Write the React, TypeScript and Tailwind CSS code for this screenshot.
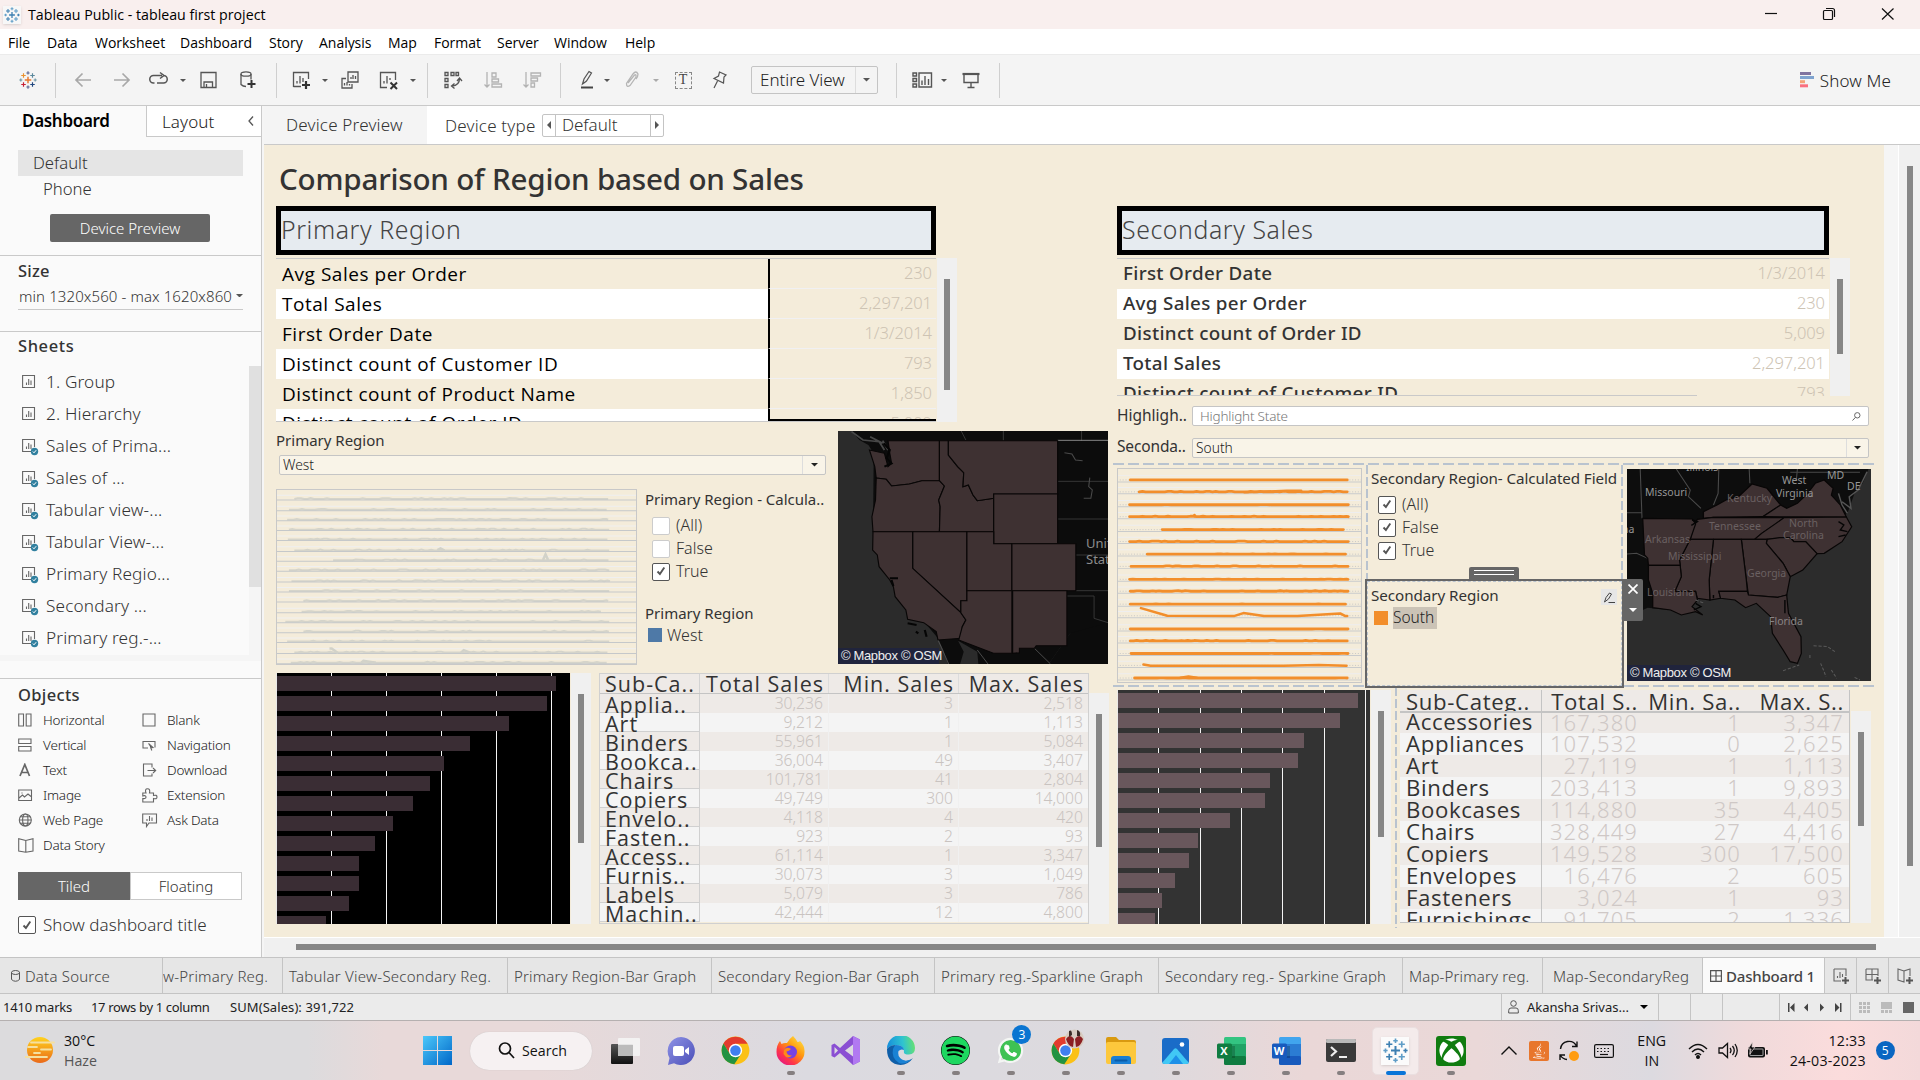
import type { ReactNode } from "react";
import { FaSpotify, FaWhatsapp, FaXbox, FaJava } from "react-icons/fa";

/* ---------- small shared pieces ---------- */

function Caret({ className = "text-[#555]", size = 8 }: { className?: string; size?: number }) {
  return (
    <svg width={size} height={size / 2} viewBox="0 0 8 4" className={`shrink-0 ${className}`}>
      <path d="M0 0H8L4 4Z" fill="currentColor" />
    </svg>
  );
}

function TableauMark({ size, mono = false }: { size: number; mono?: boolean }) {
  const c = mono
    ? ["#3c7fb1", "#5f9dc7", "#5f9dc7", "#3c7fb1", "#5f9dc7", "#3c7fb1", "#5f9dc7", "#3c7fb1", "#5f9dc7"]
    : ["#e8762c", "#5c6692", "#7199a6", "#eb912c", "#59879b", "#c72035", "#1f457e", "#7199a6", "#5c6692"];
  const plus = (x: number, y: number, r: number, color: string) => (
    <path key={`${x}-${y}`} d={`M${x - r} ${y}H${x + r}M${x} ${y - r}V${y + r}`} stroke={color} strokeWidth={r > 3 ? 1.6 : 1.3} />
  );
  return (
    <svg width={size} height={size} viewBox="0 0 20 20" fill="none">
      {plus(10, 10, 3.6, c[0])}
      {plus(10, 2.2, 1.8, c[1])}
      {plus(10, 17.8, 1.8, c[8])}
      {plus(2, 10, 1.7, c[2])}
      {plus(18, 10, 1.7, c[7])}
      {plus(5, 5, 2.5, c[3])}
      {plus(15, 5, 2.5, c[4])}
      {plus(5, 15, 2.5, c[5])}
      {plus(15, 15, 2.5, c[6])}
    </svg>
  );
}

function Check({ on }: { on: boolean }) {
  return (
    <span className={`flex h-[18px] w-[18px] shrink-0 items-center justify-center rounded-[2px] border bg-white ${on ? "border-[#555]" : "border-[#ccc]"}`}>
      {on && (
        <svg width="10" height="10" viewBox="0 0 10 10" fill="none" className="-mt-px -ml-px">
          <path d="M1.500 5.500L3.900 8L8.300 1.500" stroke="#555" strokeWidth="1.900" />
        </svg>
      )}
    </span>
  );
}

function VScroll({ className = "", top, height }: { className?: string; top: number; height: number }) {
  return (
    <div className={`flex w-[20px] shrink-0 justify-center bg-[#f0f0f0] ${className}`}>
      <div className="w-[6px] bg-[#868686]" style={{ marginTop: top, height }} />
    </div>
  );
}

/* ---------- title, menu, toolbar ---------- */

function TitleBar() {
  return (
    <div className="flex h-[29px] items-center bg-[#f9efee] font-['Open_Sans',sans-serif] text-black">
      <div className="ml-[3px] flex h-[18px] w-[18px] items-center justify-center bg-[#f7f7f7] shadow-sm">
        <TableauMark size={16} mono />
      </div>
      <span className="ml-[7px] text-[14.2px]">Tableau Public - tableau first project</span>
      <svg width="150" height="29" viewBox="0 0 150 29" fill="none" stroke="#111" strokeWidth="1.2" className="mr-[5px] ml-auto">
        <path d="M0 13.5H12" />
        <path d="M58.5 11.5a1 1 0 0 1 1-1h7a1 1 0 0 1 1 1v7a1 1 0 0 1-1 1h-7a1 1 0 0 1-1-1zM61 8.5h6.5a2 2 0 0 1 2 2v6.5" />
        <path d="M117 8.5L128.500 19.500M128.500 8.500L117 19.500" />
      </svg>
    </div>
  );
}

function MenuBar() {
  const items: [string, string][] = [
    ["File", "w-[39px]"], ["Data", "w-[48px]"], ["Worksheet", "w-[85px]"], ["Dashboard", "w-[89px]"],
    ["Story", "w-[50px]"], ["Analysis", "w-[69px]"], ["Map", "w-[46px]"], ["Format", "w-[63px]"],
    ["Server", "w-[57px]"], ["Window", "w-[71px]"], ["Help", "w-[50px]"],
  ];
  return (
    <div className="flex h-[25px] bg-white pl-[8px] font-['Open_Sans',sans-serif] text-[14px] leading-[27px] tracking-[-0.03px] text-black">
      {items.map(([t, w]) => (
        <span key={t} className={w}>{t}</span>
      ))}
    </div>
  );
}

function Slot({ w, children }: { w: string; children?: ReactNode }) {
  return <div className={`flex h-full shrink-0 items-center justify-center ${w}`}>{children}</div>;
}

const Sep = () => <div className="h-[35px] w-px shrink-0 bg-[#cfcfcf]" />;

function Ico({ children, w = 20, h = 20, color = "#555", sw = 1.3 }: { children: ReactNode; w?: number; h?: number; color?: string; sw?: number }) {
  return (
    <svg width={w} height={h} viewBox={`0 0 ${w} ${h}`} fill="none" stroke={color} strokeWidth={sw} className="shrink-0">
      {children}
    </svg>
  );
}

function Toolbar() {
  return (
    <div className="flex h-[52px] items-center border-t border-b border-t-[#ebebeb] border-b-[#c9c9c9] bg-[#f4f4f4]">
      <Slot w="w-[55px]"><TableauMark size={18} /></Slot>
      <Sep />
      <Slot w="w-[53px]"><Ico color="#a8a8a8" sw={1.7}><path d="M18 10H3M9.500 3.500L3 10L9.500 16.500" /></Ico></Slot>
      <Slot w="w-[26px]"><Ico color="#a8a8a8" sw={1.7}><path d="M2 10H17M10.500 3.500L17 10L10.500 16.500" /></Ico></Slot>
      <Slot w="w-[48px]"><Ico sw={1.5}><path d="M5.500 13H4.500a3.500 3.500 0 0 1 0-7.500H13M11 2.500L15 5.500L11 8.500M14.500 5.500a3.500 3.500 0 0 1 0 7.500H8" /></Ico></Slot>
      <Slot w="w-[0px]"><Caret size={6} /></Slot>
      <Slot w="w-[52px]"><Ico><path d="M2 2.500H17V17.500H2ZM5 17V12H13.500V17M7.500 14V17" /></Ico></Slot>
      <Slot w="w-[26px]"><Ico><ellipse cx="8" cy="4" rx="5" ry="2.200" /><path d="M3 4V14.500Q5 16.500 8 16.500M13 4V9.500" /><path d="M13.500 10V18M9.500 14H17.500" stroke="#333" strokeWidth="2" /></Ico></Slot>
      <Slot w="w-[15px]" />
      <Sep />
      <Slot w="w-[47px]"><Ico><path d="M2.500 17V2.500H17.500V9M2.500 16.500H10M6 13.500V11M9 13.500V6M12 12V8" /><path d="M15 11V19M11 15H19" stroke="#333" strokeWidth="2.200" /></Ico></Slot>
      <Slot w="w-[2px]"><Caret size={6} /></Slot>
      <Slot w="w-[48px]"><Ico><path d="M8 2H18V12H8ZM11 9V7M13 9V5M15.500 9V6M6 8.500H2V18H12V14M4.500 15.500V13M7 15.500V12M9.500 15.500V14" /></Ico></Slot>
      <Slot w="w-[27px]"><Ico><path d="M9 17.500H2.500V2.500H17.500V10M6 13.500V11M9 13.500V6M12 10V8" /><path d="M12.500 12.500L19 19M19 12.500L12.500 19" stroke="#333" strokeWidth="2" /></Ico></Slot>
      <Slot w="w-[23px]"><Caret size={6} /></Slot>
      <Slot w="w-[3px]" />
      <Sep />
      <Slot w="w-[50px]"><Ico><path d="M2 2.500H5V5.500H2ZM8 2.500H11V5.500H8ZM13 2.500H15.500V5.500H13ZM2 8.500H5V11.500H2ZM2 14.500H5V17.500H2ZM16.500 8.500Q16.500 15.500 9 16M14 11L16.500 8L19 11M11.500 13.500L8.500 16L11.500 18.500" /></Ico></Slot>
      <Slot w="w-[29px]"><Ico color="#b3b3b3"><path d="M4 2V17M1.500 14.500L4 17L6.500 14.500M9 3H13V7H9ZM9 9H15.500V12H9ZM9 14H18.500V17H9Z" /></Ico></Slot>
      <Slot w="w-[50px]"><Ico color="#b3b3b3"><path d="M4 2V17M1.500 14.500L4 17L6.500 14.500M9 3H18.500V6H9ZM9 8H15.500V11H9ZM9 13H12.500V17H9Z" /></Ico></Slot>
      <Slot w="w-[3px]" />
      <Sep />
      <Slot w="w-[51px]"><Ico sw={1.2}><path d="M5.500 14L7 9L12 1.500L14.500 3L9.500 11ZM5.500 14L9 11.500" /><path d="M4 17.500H16" stroke="#444" strokeWidth="2" /></Ico></Slot>
      <Slot w="w-[0px]"><Caret size={6} className="ml-[-10px] text-[#555]" /></Slot>
      <Slot w="w-[39px]"><Ico color="#b5b5b5"><path d="M6 13L12.500 5Q14.500 4 14 7L8 15.500Q4.500 18 4.500 13.500L11 4Q14 0 16 4Q16 7 14 9" /></Ico></Slot>
      <Slot w="w-[10px]"><Caret size={6} className="text-[#aaa]" /></Slot>
      <Slot w="w-[44px]">
        <div className="flex h-[17px] w-[17px] items-center justify-center border border-dashed border-[#888] font-['Liberation_Serif',serif] text-[14px] leading-none text-[#444]">T</div>
      </Slot>
      <Slot w="w-[28px]"><Ico sw={1.2}><path d="M10.500 2L17 5L15 7L14.500 13L5 8.500L9.500 6ZM8.500 11L5 18" /></Ico></Slot>
      <Slot w="w-[18px]" />
      <div className="flex h-[28px] w-[127px] items-center rounded-[2px] border border-[#c4c4c4] text-[17px] font-light text-[#222]">
        <span className="w-[103px] pl-[8px] leading-[26px]">Entire View</span>
        <div className="flex h-full flex-1 items-center justify-center border-l border-[#ddd]"><Caret size={7} /></div>
      </div>
      <div className="w-[18px]" />
      <Sep />
      <Slot w="w-[50px]"><Ico sw={1.4} w={22}><path d="M2 3H5.500V6H2ZM2 8.500H5.500V11.500H2ZM2 14H5.500V17H2ZM8 3H20.500V17H8ZM11 15V10.500M14 15V6M17.500 15V9" /></Ico></Slot>
      <Slot w="w-[0px]"><Caret size={6} className="ml-[-6px] text-[#555]" /></Slot>
      <Slot w="w-[47px]"><Ico sw={1.4}><path d="M1.500 4H18.500" strokeWidth="2.200" /><path d="M3 4V12.500H17V4M10 12.500V17M6.500 17.500H13.500" /></Ico></Slot>
      <Slot w="w-[5px]" />
      <Sep />
      <div className="mr-[29px] ml-auto flex items-center">
        <svg width="14" height="16" viewBox="0 0 14 16">
          <rect width="11" height="3" fill="#8074a0" /><rect y="4" width="14" height="3" fill="#7fa3cf" />
          <rect y="8.200" width="5" height="3" fill="#f3a376" /><rect y="12.300" width="8" height="3" fill="#fa6f7f" />
        </svg>
        <span className="ml-[6px] text-[17px] leading-[25px] font-light tracking-[0.15px] text-[#222]">Show Me</span>
      </div>
    </div>
  );
}

/* ---------- left pane ---------- */

function SheetIcon({ used }: { used: boolean }) {
  return (
    <svg width="18" height="18" viewBox="0 0 18 18" fill="none" className="mt-[2px] shrink-0" stroke="#666" strokeWidth="1.1">
      <path d={used ? "M12.500 9V1.500H.6V13.500H9" : "M.6 1.500H12.500V13.500H.6Z"} />
      <path d="M4.500 11V8.500M6.700 11V5M9 11V6.500" />
      {used && <><circle cx="12.500" cy="13.500" r="3.700" fill="#31809f" stroke="none" /><path d="M10.800 13.500L12 14.800L14.200 12.200" stroke="#fff" strokeWidth="1" /></>}
    </svg>
  );
}

const objectIcons: Record<string, ReactNode> = {
  Horizontal: <path d="M.7 1H5.500V13H.7ZM8.200 1H13V13H8.200Z" />,
  Vertical: <path d="M.7 1H13V5.500H.7ZM.7 8.500H13V13H.7Z" />,
  Text: <path d="M2 13L6.800 1.500L11.500 13M3.700 9.500H10" strokeWidth="1.700" />,
  Image: <path d="M.7 2H13.500V12.500H.7ZM1 10L4.500 7L6.500 9L10 6L13 8.500M4 4.500V5.500" />,
  "Web Page": <><circle cx="7.300" cy="7" r="6" /><ellipse cx="7.300" cy="7" rx="2.700" ry="6" /><path d="M1.300 7H13.300M2.500 3.800H12.200M2.500 10.200H12.200" /></>,
  "Data Story": <path d="M7.800 2.500L.7 .8V13L7.800 14.300L15 13V.8ZM7.800 2.500V14.300" />,
  Blank: <path d="M1 1H13V13H1Z" />,
  Navigation: <><path d="M6 10H1V3.500H13V9.500" /><path d="M6.500 5.500L11 9.500L8.800 9.800L9.800 12.500" fill="#555" /></>,
  Download: <path d="M10 4.500V1H1.500V13H10V10.500M5.500 7.500H13.500M11 5L13.700 7.500L11 10" />,
  Extension: <path d="M.8 5H4Q2.500 .8 5.500 .8Q8.500 .8 7.500 5H11.500V7.500Q15 6.500 15 9Q15 11.500 11.500 10.500V14H.8V10.500Q4 11 4 9Q4 7 .8 8Z" />,
  "Ask Data": <path d="M.7 1H14.500V10H7L4.500 13.500V10H.7ZM5 8V6M7.500 8V3M10 8V4.500" />,
};

function ObjectItem({ name }: { name: string }) {
  return (
    <div className="flex h-[25px] w-[124px] items-center">
      <svg width="16" height="15" viewBox="0 0 16 15" fill="none" stroke="#666" strokeWidth="1.100" className="shrink-0">{objectIcons[name]}</svg>
      <span className="ml-[9px] text-[13.500px] font-light tracking-[-0.2px] whitespace-nowrap text-[#222]">{name}</span>
    </div>
  );
}

function LeftPane() {
  const sheets = ["1. Group", "2. Hierarchy", "Sales of Prima...", "Sales of ...", "Tabular view-...", "Tabular View-...", "Primary Regio...", "Secondary ...", "Primary reg.-..."];
  return (
    <aside className="flex h-[851px] w-[262px] shrink-0 flex-col border-r border-[#c9c9c9] bg-[#fafafa] text-[#333]">
      <div className="flex h-[31px]">
        <div className="w-[146px] pl-[22px] text-[17px] leading-[30px] font-semibold tracking-[-0.3px] text-black">Dashboard</div>
        <div className="flex flex-1 items-center border-b border-l border-[#c9c9c9] bg-white pl-[15px]">
          <span className="text-[17px] leading-[31px] font-light tracking-[0.1px] text-[#222]">Layout</span>
          <svg width="6" height="10" viewBox="0 0 6 10" fill="none" stroke="#555" strokeWidth="1.300" className="mr-[7px] ml-auto"><path d="M5 .5L1 5L5 9.500" /></svg>
        </div>
      </div>
      <div className="mt-[13px] ml-[18px] h-[26px] w-[225px] bg-[#e5e5e5] pl-[15px] text-[16.700px] leading-[26px] font-light">Default</div>
      <div className="h-[26px] pl-[43px] text-[16.700px] leading-[26px] font-light">Phone</div>
      <div className="mt-[12px] ml-[50px] h-[28px] w-[160px] rounded-[2px] bg-[#666] text-center text-[15px] leading-[28px] font-light text-white">Device Preview</div>
      <div className="mt-[13px] h-[76px] border-t border-[#c9c9c9]">
        <div className="h-[26px] pl-[18px] text-[16.500px] leading-[30px] font-medium tracking-[0.200px]">Size</div>
        <div className="ml-[18px] flex h-[28px] w-[225px] items-center justify-between border-b border-[#c9c9c9]">
          <span className="pt-[2px] pl-[1px] text-[15px] font-light tracking-[0.1px] whitespace-nowrap">min 1320x560 - max 1620x860</span>
          <Caret size={7} />
        </div>
      </div>
      <div className="h-[330px] border-t border-[#c9c9c9]">
        <div className="h-[34px] pl-[18px] text-[16.500px] leading-[28px] font-medium tracking-[0.600px]">Sheets</div>
        <div className="flex h-[289px]">
          <div className="w-[249px]">
            {sheets.map((s, i) => (
              <div key={s} className="flex h-[32px] items-center pl-[22px]">
                <SheetIcon used={i > 1} />
                <span className="ml-[6px] text-[17.200px] font-light tracking-[0.150px]">{s}</span>
              </div>
            ))}
          </div>
          <div className="flex-1 bg-[#f5f5f5]"><div className="h-[221px] bg-[#e0e0e0]" /></div>
        </div>
        <div className="h-[6px] bg-[#f5f5f5]" />
      </div>
      <div className="mt-[17px] border-t border-[#c9c9c9] pl-[18px]">
        <div className="h-[29px] text-[16.500px] leading-[31px] font-medium tracking-[0.350px]">Objects</div>
        <div className="flex">
          <div>{["Horizontal", "Vertical", "Text", "Image", "Web Page", "Data Story"].map((n) => <ObjectItem key={n} name={n} />)}</div>
          <div>{["Blank", "Navigation", "Download", "Extension", "Ask Data"].map((n) => <ObjectItem key={n} name={n} />)}</div>
        </div>
        <div className="mt-[14px] flex h-[28px] w-[224px] text-center text-[15px] leading-[28px] font-light">
          <div className="w-[112px] bg-[#666] text-white">Tiled</div>
          <div className="w-[112px] border border-[#c9c9c9] bg-white leading-[26px]">Floating</div>
        </div>
        <div className="mt-[16px] flex items-center">
          <Check on />
          <span className="ml-[7px] text-[17px] leading-[18px] font-light tracking-[0.050px]">Show dashboard title</span>
        </div>
      </div>
    </aside>
  );
}

/* ---------- maps ---------- */

const westStates = [
  "138,600 180,610 190,650 200,640 195,610 190,572 334,572 334,692 285,692 250,702 200,708 185,688 157,684 153,650",
  "157,684 185,688 200,708 250,702 285,692 334,692 348,708 332,750 336,770 334,845 148,845 145,800 155,750",
  "334,572 359,572 359,615 385,650 402,668 400,710 415,705 428,735 440,752 486,745 486,845 334,845 336,770 332,750 348,708 334,692",
  "359,572 665,572 665,732 486,732 486,745 440,752 428,735 415,705 400,710 402,668 385,650 359,615",
  "486,732 665,732 665,881 486,881",
  "259,845 411,845 411,1052 394,1052 394,1088 259,955",
  "148,845 259,845 259,955 394,1088 408,1110 398,1130 395,1165 330,1170 325,1145 290,1118 245,1108 240,1080 210,1040 205,1010 195,990 165,950 160,915 147,900",
  "411,845 486,845 486,881 537,881 537,1022 411,1022",
  "537,881 716,881 716,1022 537,1022",
  "411,1022 537,1022 537,1210 485,1210 388,1170 398,1130 408,1110 394,1088 394,1052 411,1052",
  "539,1022 691,1022 691,1187 605,1187 600,1195 558,1195 558,1208 539,1210",
];

const southStates = [
  "962,415 962,395 1000,375 1025,360 1060,350 1098,312 1140,325 1178,375 1128,410 990,412",
  "1128,410 1178,375 1195,385 1225,370 1250,345 1275,310 1300,300 1325,325 1320,345 1345,375 1362,411",
  "935,440 945,418 990,412 1188,413 1160,435 1125,460 1105,478 925,478",
  "1188,413 1362,411 1377,440 1350,485 1300,520 1280,521 1248,485 1215,485 1205,473 1140,478 1105,478 1125,460",
  "1140,478 1175,473 1205,473 1215,485 1248,485 1280,521 1240,570 1205,590 1185,550 1138,490",
  "1068,478 1140,478 1138,490 1185,550 1205,590 1195,645 1170,652 1088,645 1082,600",
  "990,478 1068,478 1082,600 1085,634 1005,634 1010,655 980,660 978,600",
  "925,478 990,478 978,600 980,660 945,655 940,634 882,634 900,590 895,540",
  "792,415 930,417 940,432 925,478 895,540 897,556 808,556 806,535 797,525",
  "808,556 897,556 900,590 882,634 940,634 945,660 930,680 960,705 940,695 900,705 870,690 820,683 820,640 808,600",
  "1005,634 1085,634 1088,645 1170,652 1195,645 1200,700 1235,770 1236,820 1225,850 1205,845 1185,810 1155,760 1150,710 1110,670 1080,683 1050,660 1010,655",
];

function MapCredit() {
  return <div className="absolute bottom-0 left-0 h-[16px] w-[101px] bg-[#20243c] pl-[3px] font-['Liberation_Sans',sans-serif] text-[13px] leading-[16px] tracking-[-0.350px] whitespace-nowrap text-[#eee]">© Mapbox © OSM</div>;
}

function WestMap() {
  return (
    <div className="relative mt-[9px] h-[233px] w-[270px] overflow-hidden bg-[#2b2b2b]">
      <svg width="270" height="233" viewBox="50 543 756 699" preserveAspectRatio="none" fill="none">
        <path d="M88 543L110 570L135 585L150 610L148 845L200 1000L330 1165L345 1200L358 1242H640L700 1150L806 1242V543Z" fill="#0c0c0c" />
        <path d="M640 1242H806V1118L700 1150Z" fill="#0c0c0c" />
        <path d="M386 1172L402 1205L392 1242H443L440 1205Z" fill="#2b2b2b" />
        <path d="M88 545L120 570L165 575L180 600M140 560L175 580M175 572L190 600" stroke="#484848" strokeWidth="5" />
        <g stroke="#3c3c3c" strokeWidth="2.500">
          <path d="M665 694H806M665 807H806M716 915H806M716 1022H806M691 1038H767V1105L806 1118M513 543V572M732 543V572M395 543L408 570" />
          <path d="M600 1195L645 1242M330 1170L360 1242M440 1200L470 1242" stroke="#555" />
          <path d="M684 608L705 612L715 630L735 632M755 683L752 710L762 720L758 745L738 745" stroke="#4a4a4a" strokeWidth="3" />
          <path d="M665 571H806" stroke="#999" />
        </g>
        <g fill="#3e3132" stroke="#080606" strokeWidth="3.200">
          {westStates.map((p) => <polygon key={p} points={p} />)}
        </g>
        <path d="M178 580L195 600L186 625L200 640L180 650M195 985H218M200 990L205 1008M245 1120L270 1125M268 1145L275 1150M293 1140L298 1160" stroke="#050505" strokeWidth="6" />
      </svg>
      <div className="absolute top-[104px] left-[248px] w-[40px] text-[13px] leading-[16px] text-[#8c8c8c]">Unit<br />Stat</div>
      <MapCredit />
    </div>
  );
}

function SouthMap() {
  const dim = "text-[#6a6061]";
  const lit = "text-[#969696]";
  const labels: [string, string, string][] = [
    ["Missouri", "left-[18px] top-[16px]", lit], ["Illinois", "left-[59px] top-[-9px]", lit], ["Kentucky", "left-[100px] top-[22px]", dim],
    ["West", "left-[155px] top-[4px]", lit], ["Virginia", "left-[149px] top-[17px]", lit], ["MD", "left-[200px] top-[-1px]", lit],
    ["DE", "left-[220px] top-[10px]", lit], ["Tennessee", "left-[82px] top-[50px]", dim], ["North", "left-[162px] top-[47px]", dim],
    ["Carolina", "left-[156px] top-[59px]", dim], ["Arkansas", "left-[18px] top-[63px]", dim], ["Mississippi", "left-[41px] top-[80px]", dim],
    ["Georgia", "left-[120px] top-[97px]", dim], ["Louisiana", "left-[20px] top-[116px]", dim], ["Florida", "left-[142px] top-[145px]", "text-[#8a8485]"],
    ["na", "left-[-5px] top-[53px]", lit],
  ];
  return (
    <div className="relative mt-[4px] ml-[4px] h-[212px] w-[244px] overflow-hidden bg-[#2c2c2c]">
      <svg width="244" height="212" viewBox="748 267 683 636" preserveAspectRatio="none" fill="none">
        <path d="M748 267H1424L1408 310L1385 340L1365 400L1200 560L900 660L870 690L806 683L748 712Z" fill="#0d0d0d" />
        <path d="M748 398H788M785 267L790 415M748 522L775 520L806 535M886 267L925 330L920 350L955 385M1005 267L1003 340L990 375M1090 267L1092 310M1225 267L1222 300M1205 277H1400" stroke="#4a4a4a" strokeWidth="3" />
        <path d="M1420 275L1395 330L1370 350L1375 385L1350 365M1340 340L1350 375L1365 400" stroke="#555" strokeWidth="4" />
        <g fill="#3e3132" stroke="#080606" strokeWidth="3.400">
          {southStates.map((p) => <polygon key={p} points={p} />)}
        </g>
        <path d="M1340 425L1355 435L1345 450L1365 455M1340 470L1360 465M1190 660V700M940 670L955 680L935 690M990 655V645M930 420L945 425L928 436" stroke="#050505" strokeWidth="4" />
        <path d="M1270 797L1310 800L1330 815M1290 850L1298 870L1305 890M1185 872L1230 855M1260 825V838M1320 870L1335 895M1385 892L1400 900M940 660L965 670" stroke="#5a5a5a" strokeWidth="3" strokeDasharray="9 5" />
      </svg>
      {labels.map(([t, pos, c]) => (
        <span key={t} className={`absolute text-[10.500px] leading-[14px] ${pos} ${c}`}>{t}</span>
      ))}
      <MapCredit />
    </div>
  );
}

/* ---------- sparklines ---------- */

const graySpark: [number, number, number][] = [
  [65, 932, 747], [50, 928, 780], [45, 932, 810], [50, 935, 840], [47, 930, 870], [65, 935, 903], [172, 933, 933], [50, 935, 963], [57, 937, 996],
  [50, 935, 1026], [90, 932, 1056], [85, 912, 1089], [40, 935, 1119], [90, 934, 1149], [45, 935, 1179], [65, 930, 1212], [55, 928, 1243],
];

function bumpy(x1: number, x2: number, y: number, seed: number, amp: number, step = 9) {
  let d = `M${x1} ${y}`;
  let s = seed * 7919 + 13;
  for (let x = x1 + step; x < x2; x += step) {
    s = (s * 1103515245 + 12345) % 2147483648;
    const r = s / 2147483648;
    d += `L${x} ${(y - (r > 0.75 ? amp * r : 0)).toFixed(1)}`;
  }
  return `${d}L${x2} ${y}`;
}

function PrimarySpark() {
  return (
    <svg width="361" height="176" viewBox="17 717 992 527" preserveAspectRatio="none" fill="none" className="block border border-[#c8c8c8]">
      {graySpark.map(([x1, x2, y], i) => (
        <g key={y}>
          <path d={`M17 ${y - 14}H1009`} stroke="#efeff0" strokeWidth="3" shapeRendering="crispEdges" />
          <path d={bumpy(x1, x2, y - 3, i + 1, 2.5)} stroke="#d5d4ca" strokeWidth="6" />
          <path d={`M17 ${y}H1009`} stroke="#c5c8ca" strokeWidth="3" shapeRendering="crispEdges" />
        </g>
      ))}
      <path d="M752 929L759 912L766 929M162 1197L168 1197L186 1211M525 1210L533 1202L552 1210M250 1240L256 1234L290 1240M460 899L469 894L480 900" stroke="#d2d2c9" strokeWidth="7" />
    </svg>
  );
}

const orangeSpark: [number, number, number][] = [
  [868, 1480, 688], [893, 1480, 724], [866, 1483, 763], [866, 1483, 799], [958, 1469, 838], [866, 1483, 874], [916, 1475, 912], [870, 1482, 949],
  [866, 1482, 988], [868, 1482, 1024], [868, 1475, 1063], [0, 0, 1098], [868, 1482, 1138], [868, 1480, 1174], [870, 1482, 1212], [0, 0, 1248], [880, 1480, 1286],
];

function SecondarySpark() {
  return (
    <svg width="245" height="215" viewBox="833 655 686 643" preserveAspectRatio="none" fill="none" className="block border border-[#c8c8c8]">
      {orangeSpark.map(([x1, x2, y], i) => (
        <g key={y}>
          <path d={`M833 ${y + 6}H1519`} stroke="#c9cbcc" strokeWidth="3" shapeRendering="crispEdges" />
          <path d={`M833 ${y - 13}H1519`} stroke="#eeeeef" strokeWidth="3" shapeRendering="crispEdges" />
          <path d={`M838 ${y}H1519`} stroke="#c4c4c4" strokeWidth="2.500" strokeDasharray="3 5" />
          {x2 > 0 && <path d={bumpy(x1, x2, y, i + 3, i % 2 ? 1.5 : 0.4)} stroke="#f28e2b" strokeWidth="8.500" strokeLinecap="round" strokeLinejoin="round" />}
        </g>
      ))}
      <g stroke="#f28e2b" strokeWidth="7.500" strokeLinecap="round" strokeLinejoin="round">
        <path d="M898 1075L972 1098L1160 1099L1187 1090L1245 1099H1340L1460 1091L1475 1099H1480" />
        <path d="M905 1245L925 1249H1300L1400 1247L1478 1249" />
        <path d="M1049 794V797M1190 725L1310 721H1350M1010 1285L1032 1281L1055 1285" />
      </g>
    </svg>
  );
}

/* ---------- bar charts ---------- */

function Bars({ ends, grid, width, height, offset, color, bg }: { ends: number[]; grid: number[]; width: number; height: number; offset: number; color: string; bg: string }) {
  return (
    <svg width={width} height={height} viewBox={`0 0 ${width} ${height}`} shapeRendering="crispEdges" className="shrink-0">
      <rect width={width} height={height} fill={bg} />
      {grid.map((x) => <rect key={x} x={x} y="0" width="1" height={height} fill="#f4f4f4" />)}
      <rect width="1" height={height} fill="#e8e8e8" />
      {ends.map((w, i) => <rect key={i} x="1" y={offset + i * 20} width={w} height="15" fill={color} />)}
    </svg>
  );
}

/* ---------- dashboard columns ---------- */

function SummaryTable({ rows, bold }: { rows: [string, string][]; bold?: boolean }) {
  return (
    <>
      {rows.map(([k, v], i) => (
        <div key={k} className={`flex h-[30px] shrink-0 ${bold && i % 2 ? "bg-white" : ""}`}>
          <div
            className={`font-medium whitespace-nowrap ${bold ? "flex-1 pl-[6px] font-['Noto_Sans',sans-serif] text-[18.800px] leading-[29px] tracking-[0.320px] text-[#333]" : `w-[492px] pl-[6px] font-['Open_Sans',sans-serif] text-[19px] leading-[31px] tracking-[0.530px] text-black ${i % 2 ? "bg-white" : ""}`}`}
          >{k}</div>
          <div className={`text-right text-[16.500px] leading-[27px] font-light tracking-[-0.050px] text-[#cdc3b3] ${bold ? "pr-[4px]" : "flex-1 border-b border-l-2 border-b-[#f0f0f2] border-l-black pr-[4px]"}`}>{v}</div>
        </div>
      ))}
    </>
  );
}

function CheckRow({ label, on }: { label: string; on: boolean }) {
  return (
    <div className="flex h-[23px] items-center">
      <Check on={on} />
      <span className="ml-[6px] text-[16px] leading-[23px] font-light text-[#333]">{label}</span>
    </div>
  );
}

const leftTable: [string, string, string, string][] = [
  ["Applia..", "30,236", "3", "2,518"], ["Art", "9,212", "1", "1,113"], ["Binders", "55,961", "1", "5,084"], ["Bookca..", "36,004", "49", "3,407"],
  ["Chairs", "101,781", "41", "2,804"], ["Copiers", "49,749", "300", "14,000"], ["Envelo..", "4,118", "4", "420"], ["Fasten..", "923", "2", "93"],
  ["Access..", "61,114", "1", "3,347"], ["Furnis..", "30,073", "3", "1,049"], ["Labels", "5,079", "3", "786"], ["Machin..", "42,444", "12", "4,800"],
];

const rightTable: [string, string, string, string][] = [
  ["Accessories", "167,380", "1", "3,347"], ["Appliances", "107,532", "0", "2,625"], ["Art", "27,119", "1", "1,113"], ["Binders", "203,413", "1", "9,893"],
  ["Bookcases", "114,880", "35", "4,405"], ["Chairs", "328,449", "27", "4,416"], ["Copiers", "149,528", "300", "17,500"], ["Envelopes", "16,476", "2", "605"],
  ["Fasteners", "3,024", "1", "93"], ["Furnishings", "91,705", "2", "1,336"],
];

function PrimaryColumn() {
  return (
    <div className="ml-[12px] w-[837px] shrink-0">
      <div className="h-[49px] w-[660px] border-[5px] border-black bg-[#e6ebf0] text-[24.800px] leading-[36px] font-light tracking-[0.600px] text-[#444]">Primary Region</div>
      <div className="mt-[3px] flex h-[164px]">
        <div className="flex w-[660px] flex-col overflow-hidden border-t border-b border-[#c9c9c9]">
          <SummaryTable rows={[["Avg Sales per Order", "230"], ["Total Sales", "2,297,201"], ["First Order Date", "1/3/2014"], ["Distinct count of Customer ID", "793"], ["Distinct count of Product Name", "1,850"]]} />
          <div className="flex h-[12px] overflow-hidden">
            <div className="w-[492px] bg-white pl-[6px] font-['Open_Sans',sans-serif] text-[19px] leading-[29px] font-medium tracking-[0.530px] text-black">Distinct count of Order ID</div>
            <div className="flex-1 overflow-hidden border-b-2 border-l-2 border-black pr-[4px] text-right text-[16.500px] leading-[27px] font-light text-[#cdc3b3]">5,009</div>
          </div>
        </div>
        <VScroll className="ml-[1px]" top={21} height={111} />
      </div>
      <div className="flex h-[251px]">
        <div className="w-[562px]">
          <div className="h-[29px] pt-[8px] text-[15px] leading-[20px] text-[#333]">Primary Region</div>
          <div className="mt-[4px] ml-[3px] flex h-[20px] w-[547px] items-center rounded-[2px] border border-[#c5c5c5] bg-[#f9f4e8]">
            <span className="flex-1 pl-[3px] text-[13.800px] leading-[18px] font-light text-[#222]">West</span>
            <div className="flex h-full w-[23px] items-center justify-center border-l border-[#ddd]"><Caret size={7} className="text-[#222]" /></div>
          </div>
          <div className="mt-[14px] flex">
            <PrimarySpark />
            <div className="ml-[8px]">
              <div className="h-[25px] text-[15px] leading-[20px] tracking-[-0.020px] whitespace-nowrap text-[#333]">Primary Region - Calcula..</div>
              <div className="pl-[7px]">
                <CheckRow label="(All)" on={false} />
                <CheckRow label="False" on={false} />
                <CheckRow label="True" on />
              </div>
              <div className="mt-[20px] text-[15px] leading-[20px] text-[#333]">Primary Region</div>
              <div className="flex h-[24px] items-center pl-[3px]">
                <div className="h-[14px] w-[14px] bg-[#4e79a7]" />
                <span className="ml-[5px] text-[16px] leading-[22px] font-light text-[#333]">West</span>
              </div>
            </div>
          </div>
        </div>
        <WestMap />
      </div>
      <div className="flex h-[251px]">
        <Bars width={294} height={251} offset={3} color="#3a2d34" bg="#000" grid={[55, 110, 165, 220, 275]} ends={[279, 270, 232, 193, 167, 153, 136, 116, 98, 82, 82, 72, 49]} />
        <VScroll className="ml-[1px]" top={21} height={149} />
        <div className="ml-[8px] w-[490px] border border-[#d0d0d0] text-[#333]">
          <div className="flex h-[20px] border-b border-[#c4c4c4] bg-[#eeeae7] text-right font-['Open_Sans',sans-serif] text-[21.500px] leading-[20px] font-medium tracking-[1px] whitespace-nowrap">
            <div className="w-[100px] border-r border-[#d3d3d3] pl-[5px] text-left">Sub-Ca..</div>
            <div className="w-[129px] border-r border-[#dcdcdc] pr-[4px]">Total Sales</div>
            <div className="w-[130px] border-r border-[#dcdcdc] pr-[4px]">Min. Sales</div>
            <div className="w-[129px] pr-[4px]">Max. Sales</div>
          </div>
          {leftTable.map((r, i) => (
            <div key={r[0]} className={`flex h-[19px] text-right text-[15.700px] leading-[18px] font-light text-[#c9c3c0] ${i % 2 ? "bg-[#f4f4f4]" : "bg-[#eeeae7]"}`}>
              <div className="relative z-10 w-[100px] border-r border-b border-[#d0d0d0] pl-[5px] text-left font-['Open_Sans',sans-serif] text-[21.500px] leading-[21px] font-medium tracking-[1px] whitespace-nowrap text-[#333]">{r[0]}</div>
              <div className="w-[129px] border-r border-[#f0f0f0] pr-[5px]">{r[1]}</div>
              <div className="w-[130px] border-r border-[#f0f0f0] pr-[5px]">{r[2]}</div>
              <div className="w-[129px] pr-[5px]">{r[3]}</div>
            </div>
          ))}
        </div>
        <VScroll className="mt-[20px]" top={21} height={133} />
      </div>
    </div>
  );
}

const DashH = () => <div className="h-[2px] w-[763px] shrink-0 bg-[repeating-linear-gradient(90deg,#b9c3cf_0_11px,transparent_11px_15px)]" />;
const DashV = ({ className = "" }: { className?: string }) => (
  <div className={`w-[2px] shrink-0 bg-[repeating-linear-gradient(180deg,#b9c3cf_0_9px,transparent_9px_12px)] ${className}`} />
);

function SecondaryColumn() {
  return (
    <div className="w-[771px] shrink-0">
      <div className="ml-[4px] h-[49px] w-[712px] border-[5px] border-black bg-[#e6ebf0] text-[24.800px] leading-[36px] font-light tracking-[0.600px] text-[#444]">Secondary Sales</div>
      <div className="mt-[3px] ml-[4px] flex h-[138px]">
        <div className="flex w-[712px] flex-col overflow-hidden border-t border-[#c9c9c9]">
          <SummaryTable bold rows={[["First Order Date", "1/3/2014"], ["Avg Sales per Order", "230"], ["Distinct count of Order ID", "5,009"], ["Total Sales", "2,297,201"]]} />
          <div className="flex h-[17px] shrink-0">
            <div className="w-[580px] overflow-hidden border-b border-[#c9c9c9] pl-[6px] text-[18.800px] leading-[29px] font-medium tracking-[0.320px] text-[#333]">Distinct count of Customer ID</div>
            <div className="flex-1 overflow-hidden pr-[4px] text-right text-[16.500px] leading-[27px] font-light text-[#cdc3b3]">793</div>
          </div>
        </div>
        <VScroll className="ml-[1px]" top={21} height={75} />
      </div>
      <div className="mt-[10px] ml-[4px] flex h-[20px] text-[15.500px] text-[#333]">
        <span className="w-[75px] leading-[18px]">Highligh..</span>
        <div className="flex h-[20px] w-[677px] items-center justify-between rounded-[2px] border border-[#c5c5c5] bg-white px-[7px]">
          <span className="text-[13.500px] font-light tracking-[-0.2px] text-[#777]">Highlight State</span>
          <svg width="9" height="9" viewBox="0 0 9 9" fill="none" stroke="#666"><circle cx="5.300" cy="3.300" r="2.700" /><path d="M3.500 5.300L.5 8.500" /></svg>
        </div>
      </div>
      <div className="mt-[12px] ml-[4px] flex h-[20px] text-[15.500px] text-[#333]">
        <span className="w-[75px] leading-[17px] tracking-[-0.150px]">Seconda..</span>
        <div className="flex h-[20px] w-[677px] items-center rounded-[2px] border border-[#c5c5c5] bg-[#f9f4e8]">
          <span className="flex-1 pl-[3px] text-[13.800px] leading-[18px] font-light text-[#222]">South</span>
          <div className="flex h-full w-[22px] items-center justify-center border-l border-[#ddd]"><Caret size={7} className="text-[#222]" /></div>
        </div>
      </div>
      <div className="h-[5px]" />
      <DashH />
      <div className="flex h-[220px]">
        <div className="w-[253px] pt-[3px] pl-[4px]"><SecondarySpark /></div>
        <DashV />
        <div className="w-[253px]">
          <div className="h-[114px]">
            <div className="pt-[3px] pl-[3px] text-[15.200px] leading-[21px] tracking-[-0.100px] whitespace-nowrap text-[#333]">Secondary Region- Calculated Field</div>
            <div className="mt-[4px] pl-[10px]">
              <CheckRow label="(All)" on />
              <CheckRow label="False" on />
              <CheckRow label="True" on />
            </div>
            <div className="mt-[5px] ml-[101px] flex h-[12px] w-[50px] flex-col items-center gap-[3px] rounded-t-[2px] bg-[#666] pt-[3px]">
              <div className="h-px w-[40px] bg-white" /><div className="h-px w-[40px] bg-white" />
            </div>
          </div>
          <div className="relative z-10 -ml-[3px] flex h-[109px] w-[259px] items-start">
            <div className="flex h-full w-[259px] shrink-0 flex-col border-2 border-[#666] bg-[#f4ecda]">
              <div className="flex flex-1 flex-col border border-dashed border-[#b9c3cf] pl-[3px]">
                <div className="flex h-[25px] items-center justify-between pt-[2px] pr-[4px]">
                  <span className="text-[15.200px] leading-[21px] tracking-[-0.050px] text-[#333]">Secondary Region</span>
                  <div className="mt-[3px] flex h-[16px] w-[16px] items-center justify-center bg-[#e6e6e6]">
                    <svg width="13" height="13" viewBox="0 0 13 13" fill="none" stroke="#444"><path d="M1.500 11L3 6.500L6.500 2L8.500 3L5.500 8ZM5.500 11.500H12" /></svg>
                  </div>
                </div>
                <div className="flex h-[22px] items-center pl-[3px]">
                  <div className="h-[14px] w-[14px] bg-[#f28e2b]" />
                  <span className="ml-[5px] h-[22px] w-[44px] bg-[#cbc3b6] text-[15.500px] leading-[20px] font-light text-[#222]">South</span>
                </div>
              </div>
            </div>
            <div className="-ml-[1px] flex h-[42px] w-[20px] shrink-0 flex-col items-center justify-between rounded-r-[2px] bg-[#666] pt-[5px] pr-[1px] pb-[9px]">
              <svg width="10" height="10" viewBox="0 0 10 10" stroke="#fff" strokeWidth="1.700"><path d="M.5 .5L9.500 9.500M9.500 .5L.5 9.500" /></svg>
              <Caret size={8} className="text-white" />
            </div>
          </div>
        </div>
        <DashV className="h-[114px]" />
        <SouthMap />
      </div>
      <DashH />
      <div className="flex">
        <div className="mt-[3px] ml-[4px] flex h-[234px] w-[278px]">
          <Bars width={253} height={234} offset={3} color="#69575c" bg="#333" grid={[41, 83, 124, 165, 207, 248]} ends={[240, 222, 186, 180, 152, 147, 112, 80, 71, 57, 44, 37]} />
          <VScroll className="ml-[1px]" top={21} height={126} />
        </div>
        <DashV className="h-[241px]" />
        <div className="mt-[3px] ml-[3px] flex h-[233px]">
          <div className="flex w-[450px] flex-col overflow-hidden border-b border-[#c4c4c4] font-['Open_Sans',sans-serif]">
            <div className="flex h-[23px] shrink-0 border-b-2 border-[#c4c4c4] bg-[#eeeae7] text-right text-[22.200px] leading-[24px] font-medium tracking-[0.650px] whitespace-nowrap text-[#333]">
              <div className="h-[21px] w-[142px] overflow-hidden border-r border-[#c4c4c4] pl-[6px] text-left">Sub-Categ..</div>
              <div className="w-[96px]">Total S..</div>
              <div className="w-[103px]">Min. Sa..</div>
              <div className="flex-1 border-r border-[#c4c4c4] pr-[5px]">Max. S..</div>
            </div>
            {rightTable.map((r, i) => (
              <div key={r[0]} className={`flex shrink-0 text-right font-['Noto_Sans',sans-serif] text-[22px] font-light tracking-[1.100px] text-[#cfc8c6] ${i === 0 ? "h-[20px] leading-[18px]" : "h-[22px] leading-[21px]"} ${i % 2 ? "bg-[#f4f4f4]" : "bg-[#eeeae7]"}`}>
                <div className="w-[142px] border-r border-[#c4c4c4] pl-[6px] text-left font-['Open_Sans',sans-serif] text-[22.200px] font-medium tracking-[0.650px] text-[#333]">{r[0]}</div>
                <div className="w-[96px]">{r[1]}</div>
                <div className="w-[103px]">{r[2]}</div>
                <div className="flex-1 border-r border-[#c4c4c4] pr-[5px]">{r[3]}</div>
              </div>
            ))}
          </div>
          <VScroll className="mt-[21px] ml-[1px]" top={21} height={94} />
        </div>
      </div>
    </div>
  );
}

function Workspace() {
  return (
    <div className="flex h-[851px] flex-1 flex-col">
      <div className="flex h-[39px] items-center border-b border-[#c9c9c9] bg-white text-[17px] font-light tracking-[0.200px] text-[#333]">
        <div className="h-full w-[163px] bg-[#f4f4f4] pl-[22px] leading-[37px]">Device Preview</div>
        <span className="ml-[18px] w-[97px] leading-[37px]">Device type</span>
        <div className="flex h-[23px] w-[122px] items-center rounded-[2px] border border-[#c4c4c4]">
          <div className="flex w-[12px] justify-center"><svg width="4" height="8" viewBox="0 0 4 8"><path d="M4 0V8L0 4Z" fill="#555" /></svg></div>
          <div className="h-full flex-1 border-x border-[#c4c4c4] pl-[6px] leading-[20px] tracking-[-0.050px]">Default</div>
          <div className="flex w-[12px] justify-center"><svg width="4" height="8" viewBox="0 0 4 8"><path d="M0 0V8L4 4Z" fill="#555" /></svg></div>
        </div>
      </div>
      <div className="flex h-[792px]">
        <div className="w-[1620px] shrink-0 overflow-hidden bg-[#f4ecda]">
          <div className="h-[61px] pl-[15px] text-[29.600px] leading-[68px] font-medium tracking-[-0.200px] text-[#333]">Comparison of Region based on Sales</div>
          <div className="flex">
            <PrimaryColumn />
            <SecondaryColumn />
          </div>
        </div>
        <div className="w-[15px] border-r border-white bg-[#f5f5f5]" />
        <div className="flex flex-1 bg-[#f0f0f0] pl-[8px]"><div className="mt-[21px] h-[700px] w-[6px] bg-[#868686]" /></div>
      </div>
      <div className="h-[20px] border-t border-white bg-[#f0f0f0] pt-[6px]"><div className="ml-[32px] h-[6px] w-[1580px] bg-[#868686]" /></div>
    </div>
  );
}

/* ---------- sheet tabs and status bar ---------- */

function SheetTabs() {
  const tabs: [string, string][] = [
    ["Tabular View-Secondary Reg.", "w-[225px] pl-[6px] tracking-[0.250px]"], ["Primary Region-Bar Graph", "w-[204px] pl-[6px] tracking-[0.150px]"],
    ["Secondary Region-Bar Graph", "w-[223px] pl-[6px] tracking-[0.150px]"], ["Primary reg.-Sparkline Graph", "w-[224px] pl-[6px] tracking-[0.180px]"],
    ["Secondary reg.- Sparkine Graph", "w-[244px] pl-[6px] tracking-[0.170px]"], ["Map-Primary reg.", "w-[140px] pl-[6px] tracking-[0.150px]"], ["Map-SecondaryReg", "w-[160px] pl-[10px] tracking-[0.220px]"],
  ];
  const add = ["M2 2H14V9M2 2V14H9M5.500 11V9M8 11V5M10.500 10V7", "M2 2H14V9M2 2V13H9M8 2V13M2 7.500H14", "M8 4L2 2V13L8 15V4L14 2V9"];
  return (
    <div className="flex h-[37px] border-y border-[#c4c4c4] bg-[#e6e6e6] text-[15px] leading-[36px] font-light whitespace-nowrap text-[#444]">
      <div className="flex w-[163px] items-center border-r border-[#c4c4c4] pl-[11px]">
        <svg width="9" height="12" viewBox="0 0 9 12" fill="none" stroke="#555"><ellipse cx="4.500" cy="2.500" rx="4" ry="2" /><path d="M.5 2.500V9.500Q4.500 13 8.500 9.500V2.500" /></svg>
        <span className="ml-[5px] tracking-[0.200px]">Data Source</span>
      </div>
      <div className="w-[120px] overflow-hidden border-r border-[#c4c4c4] tracking-[0.200px]">w-Primary Reg.</div>
      {tabs.map(([t, w]) => <div key={t} className={`border-r border-[#c4c4c4] ${w}`}>{t}</div>)}
      <div className="flex w-[121px] items-center bg-[#fafafa] pl-[7px] font-medium tracking-[-0.200px]">
        <svg width="12" height="12" viewBox="0 0 12 12" fill="none" stroke="#555" strokeWidth="1.200"><path d="M.6 .6H11.400V11.400H.6ZM6 .6V11.400M.6 6H11.400" /></svg>
        <span className="ml-[4px] leading-[34px]">Dashboard 1</span>
      </div>
      {add.map((d) => (
        <div key={d} className="flex flex-1 items-center justify-center border-l border-[#c4c4c4]">
          <svg width="18" height="18" viewBox="0 0 18 18" fill="none" stroke="#666" strokeWidth="1.100"><path d={d} /><path d="M13.500 10V17M10 13.500H17" stroke="#555" strokeWidth="2" /></svg>
        </div>
      ))}
    </div>
  );
}

function StatusBar() {
  return (
    <div className="flex h-[27px] border-b border-[#b5b0b0] bg-[#ebebeb] text-[13px] leading-[26px] text-[#222]">
      <span className="w-[88px] pl-[3px] tracking-[-0.200px]">1410 marks</span>
      <span className="w-[139px] pl-[3px] tracking-[-0.350px]">17 rows by 1 column</span>
      <span className="pl-[3px] tracking-[0.080px]">SUM(Sales): 391,722</span>
      <div className="ml-auto flex">
        <div className="flex w-[157px] items-center border-l border-[#c4c4c4] pl-[6px]">
          <svg width="11" height="14" viewBox="0 0 11 14" fill="none" stroke="#555"><circle cx="5.500" cy="3.500" r="2.800" /><path d="M.7 13V10.500Q.7 8 3 8H8Q10.300 8 10.300 10.500V13Z" /></svg>
          <span className="ml-[8px]">Akansha Srivas...</span>
          <Caret size={8} className="ml-[11px] text-black" />
        </div>
        <div className="w-[32px] border-l border-[#c4c4c4]" />
        <div className="w-[32px] border-l border-[#c4c4c4]" />
        <div className="w-[57px] border-l border-[#c4c4c4]" />
        <div className="flex w-[71px] items-center justify-center border-l border-[#c4c4c4]">
          <svg width="56" height="9" viewBox="0 0 56 9" fill="#444"><path d="M1 0H2.500V9H1ZM7.500 0V9L3 4.500ZM21 .5V8.500L17 4.500ZM33 .5V8.500L37 4.500ZM48 0V9L52.500 4.500ZM53 0H54.500V9H53Z" /></svg>
        </div>
        <div className="flex w-[70px] items-center gap-[11px] border-l border-[#c4c4c4] pl-[8px]">
          <svg width="11" height="11" viewBox="0 0 11 11" fill="#bbb"><path d="M0 0H3V3H0ZM4 0H7V3H4ZM8 0H11V3H8ZM0 4H3V7H0ZM4 4H7V7H4ZM8 4H11V7H8ZM0 8H3V11H0ZM4 8H7V11H4ZM8 8H11V11H8Z" /></svg>
          <svg width="11" height="11" viewBox="0 0 11 11" fill="#bbb"><path d="M0 0H11V7H0ZM0 8H3V11H0ZM4 8H7V11H4ZM8 8H11V11H8Z" /></svg>
          <div className="h-[11px] w-[11px] bg-[#666]" />
        </div>
      </div>
    </div>
  );
}

/* ---------- taskbar ---------- */

function Chrome() {
  return (
    <svg width="29" height="29" viewBox="0 0 48 48">
      <circle cx="24" cy="24" r="23" fill="#fbc116" />
      <path d="M24 13H43.920A23 23 0 0 0 4.080 12.500L14.500 29.500Z" fill="#e33b2e" />
      <path d="M4.080 12.500A23 23 0 0 0 22 46.900L33.500 29.500L24 35L14.500 29.500Z" fill="#229342" />
      <circle cx="24" cy="24" r="11" fill="#fff" />
      <circle cx="24" cy="24" r="8.700" fill="#3f7fee" />
    </svg>
  );
}

const DocIcon = ({ letter, dark, mid, light }: { letter: string; dark: string; mid: string; light: string }) => (
  <div className="relative h-[28px] w-[29px]">
    <svg width="29" height="28" viewBox="0 0 29 28"><rect x="7" width="22" height="9.500" rx="1.500" fill={light} /><rect x="7" y="7" width="22" height="14" fill={mid} /><rect x="7" y="19" width="22" height="9" rx="1.500" fill={dark} /><rect x="7" y="9" width="11" height="12" fill="#000" opacity=".2" /><rect y="6.500" width="15" height="15" rx="1.500" fill={dark} /></svg>
    <span className="absolute top-[6px] left-0 w-[15px] text-center text-[11px] leading-[16px] font-bold text-white">{letter}</span>
  </div>
);

function Taskbar() {
  const apps: { key: string; node: ReactNode; dot?: boolean }[] = [
    { key: "views", node: <svg width="29" height="28" viewBox="0 0 29 28"><defs><linearGradient id="tv" x1="0" y1="0" x2="0" y2="1"><stop offset="0" stopColor="#555" /><stop offset="1" stopColor="#111" /></linearGradient></defs><rect y="7" width="22" height="20" rx="1" fill="url(#tv)" /><rect x="7" y="1" width="22" height="18" rx="1" fill="#f4f4f4" opacity=".9" /><rect x="7" y="8" width="15" height="11" fill="#bbb" /></svg> },
    { key: "chat", node: <svg width="28" height="28" viewBox="0 0 28 28"><defs><linearGradient id="chat" x1="0" y1="0" x2="1" y2="1"><stop offset="0" stopColor="#8f93e6" /><stop offset="1" stopColor="#4b4fb8" /></linearGradient></defs><path d="M14 0A14 14 0 1 1 7 26.200L1 28L2.500 21A14 14 0 0 1 14 0Z" fill="url(#chat)" /><rect x="6" y="9" width="11" height="10" rx="2" fill="#fff" /><path d="M18 13L22 10V18L18 15Z" fill="#fff" /></svg> },
    { key: "chrome", node: <Chrome /> },
    { key: "firefox", dot: true, node: <svg width="29" height="29" viewBox="0 0 29 29"><defs><linearGradient id="ff" x1="1" y1="0" x2="0.200" y2="1"><stop offset="0" stopColor="#fff14f" /><stop offset=".45" stopColor="#ff980e" /><stop offset=".75" stopColor="#ff3647" /><stop offset="1" stopColor="#e31587" /></linearGradient></defs><path d="M17 0Q20 3 21.500 6Q23.500 6 24 5Q29 10 28.500 16A14 13.500 0 0 1 .5 16Q.5 9 4 5L5.500 8Q8 6.500 11 7Q13 3 17 0Z" fill="url(#ff)" /><circle cx="14.500" cy="16" r="6.500" fill="#7543e3" /><path d="M8 14Q11 10 15 13Q13 15 10.500 15.500Q11 20 16 19.500Q11 24 7.500 18Z" fill="#ff8a16" /></svg> },
    { key: "vs", node: <svg width="30" height="29" viewBox="0 0 30 29"><path d="M22 0L29 3.500V25.500L22 29L9 17L3.500 21.500L.5 20V9L3.500 7.500L9 12ZM22 8.500L14 14.500L22 20.500ZM3.500 11V18L7 14.500Z" fill="#8a4fd3" fillRule="evenodd" /><path d="M22 0L29 3.500V25.500L22 29Z" fill="#b179f1" /></svg> },
    { key: "edge", dot: true, node: <svg width="30" height="29" viewBox="0 0 30 29"><defs><linearGradient id="eg" x1="0" y1=".3" x2="1" y2=".2"><stop offset="0" stopColor="#1790dc" /><stop offset=".55" stopColor="#2fc3d0" /><stop offset="1" stopColor="#6be36b" /></linearGradient></defs><path d="M1 13A14 13.500 0 0 1 29 12Q29 18 23 18.500Q17 18.500 18 15Q17 9 11 9Q4 9 1 13Z" fill="url(#eg)" /><path d="M1 13Q4 9 10 9Q7 13 9 18Q12 25 20 25Q24 25 27 22Q22 29 14.500 29Q1 28 1 13Z" fill="#0f5ea8" /><path d="M10 9Q17 9 18 14Q15 12.500 12.500 15Q11 20 16 23.500Q20 26 25.500 23Q20 29 13 27Q5 22 7 13Q8 10 10 9Z" fill="#1a82d4" /></svg> },
    { key: "spotify", dot: true, node: <div className="rounded-full bg-black"><FaSpotify size={29} color="#1ed760" /></div> },
    { key: "whatsapp", dot: true, node: <div className="relative"><div className="flex h-[29px] w-[29px] items-center justify-center"><FaWhatsapp size={29} color="#f4f6f4" className="absolute" /><div className="h-[22px] w-[22px] rounded-full bg-[#3ec253]" /><svg width="14" height="14" viewBox="0 0 14 14" className="absolute"><path d="M3 1L5 1.500L5.700 4.500L4.500 6Q6 8.500 8.300 9.500L9.800 8L12.500 9.500L12 12Q10 14 6 11Q2 8 1.200 5Q1 2 3 1Z" fill="#fff" /></svg></div><span className="absolute -top-[11px] left-[16px] h-[19px] w-[19px] rounded-full bg-[#0a75d1] text-center text-[12px] leading-[19px] text-white">3</span></div> },
    { key: "chrome2", dot: true, node: <div className="relative"><Chrome /><svg width="19" height="20" viewBox="0 0 19 20" className="absolute -top-[7px] left-[14px]"><circle cx="9.500" cy="10" r="9.500" fill="#d8cbc0" /><path d="M1 10Q5 4 9 10L8 18Q3 17 1 10ZM10 10Q14 4 18 10Q16 17 11 18Z" fill="#8c1f22" /><path d="M4 2Q7 0 7 6L4 8ZM12 1Q16 2 15 7H12Z" fill="#3a2a25" /></svg></div> },
    { key: "files", dot: true, node: <svg width="30" height="27" viewBox="0 0 30 27"><path d="M0 2Q0 0 2 0H10L13 3H28Q30 3 30 5V10H0Z" fill="#d99a10" /><rect y="5" width="30" height="22" rx="2" fill="#fdc83c" /><path d="M5 27V22Q5 19 8 19H22Q25 19 25 22V27Z" fill="#1a7fd4" /><rect x="8.500" y="22.500" width="13" height="2" rx="1" fill="#0b5ca8" /></svg> },
    { key: "photos", dot: true, node: <svg width="27" height="26" viewBox="0 0 27 26"><rect width="27" height="26" rx="3" fill="#1a6cc8" /><path d="M0 25L12 11Q13.500 9.500 15 11L27 25Q26 26 24 26H3Q1 26 0 25Z" fill="#41c8f5" /><path d="M7 26L14 17L21 26Z" fill="#1e90e8" /><circle cx="20" cy="6.500" r="2.300" fill="#fff" /></svg> },
    { key: "excel", dot: true, node: <DocIcon letter="X" dark="#107c41" mid="#21a366" light="#33c481" /> },
    { key: "word", dot: true, node: <DocIcon letter="W" dark="#185abd" mid="#2b7cd3" light="#41a5ee" /> },
    { key: "terminal", dot: true, node: <svg width="30" height="23" viewBox="0 0 30 23"><rect width="30" height="23" rx="2" fill="#3a3a3a" /><rect width="30" height="4" rx="1.500" fill="#b9b9b9" /><path d="M5 8L10 12.500L5 17M13 18H21" stroke="#eee" strokeWidth="2.200" fill="none" /></svg> },
    { key: "tableau", node: <div className="-ml-[2px] flex h-[48px] w-[47px] items-center justify-center rounded-[5px] border border-[#eadfe0] bg-[#f4ebeb]"><div className="flex h-[28px] w-[28px] items-center justify-center bg-[#fbfbfb] shadow-sm"><TableauMark size={25} mono /></div></div> },
    { key: "xbox", dot: true, node: <div className="flex h-[30px] w-[30px] items-center justify-center rounded-[3px] bg-[#107c10]"><FaXbox size={25} color="#fff" /></div> },
  ];
  return (
    <div className="flex h-[59px] shrink-0 items-center bg-[linear-gradient(90deg,#dcdbdd_0%,#dcdbdd_16%,#e8d9d9_20%,#e8d9d9_28%,#dbdae0_42%,#dddade_60%,#ead7d7_68%,#ead8d8_77%,#dcdae0_86%,#f0dadb_91%,#fbdcdc_96%,#f3d9da_100%)] font-['Open_Sans',sans-serif] text-[14.200px] text-[#111]">
      <div className="flex w-[423px] items-center pl-[25px]">
        <svg width="31" height="28" viewBox="0 0 31 28"><defs><linearGradient id="sun" x1="0" y1="0" x2="0" y2="1"><stop offset="0" stopColor="#ffd21e" /><stop offset="1" stopColor="#ea6a1a" /></linearGradient></defs><circle cx="15" cy="13" r="13" fill="url(#sun)" /><path d="M6 5.500H29M3 10H12M16 12.500H26M0 20H22M9 16H15" stroke="#f5e0a0" strokeWidth="1.800" strokeLinecap="round" /></svg>
        <div className="ml-[8px] leading-[20px]"><div>30°C</div><div className="text-[#555]">Haze</div></div>
      </div>
      <svg width="29" height="29" viewBox="0 0 29 29"><defs><linearGradient id="win" x1="0" y1="0" x2="1" y2="1"><stop offset="0" stopColor="#4cc8fa" /><stop offset="1" stopColor="#0067c8" /></linearGradient></defs><path d="M0 0H14V14H0ZM15 0H29V14H15ZM0 15H14V29H0ZM15 15H29V29H15Z" fill="url(#win)" /></svg>
      <div className="ml-[18px] flex h-[38px] w-[122px] items-center rounded-full bg-[#f6f1f2] pl-[28px] shadow-[0_0_1px_#bbb]">
        <svg width="17" height="17" viewBox="0 0 17 17" fill="none" stroke="#111" strokeWidth="1.700"><circle cx="7" cy="6.500" r="5.500" /><path d="M11 10.500L16 16" /></svg>
        <span className="ml-[7px]">Search</span>
      </div>
      <div className="ml-[6px] flex h-full">
        {apps.map((a) => (
          <div key={a.key} className="relative flex w-[55.060px] items-center justify-center">
            {a.node}
            {a.dot && <div className="absolute bottom-[5px] h-[4px] w-[8px] rounded-full bg-[#857f80]" />}
            {a.key === "tableau" && <div className="absolute bottom-[5px] h-[4px] w-[20px] rounded-full bg-[#0a75d8]" />}
          </div>
        ))}
      </div>
      <div className="ml-[15px] flex h-full items-center">
        <Slot w="w-[30px]"><Ico w={16} h={9} color="#111" sw={1.400}><path d="M.5 8.500L8 1L15.500 8.500" /></Ico></Slot>
        <Slot w="w-[30px]"><div className="flex h-[20px] w-[20px] items-center justify-center rounded-[2px] bg-[#e8762c]"><FaJava size={16} color="#fff" /></div></Slot>
        <Slot w="w-[30px]"><svg width="22" height="22" viewBox="0 0 22 22" fill="none" stroke="#111" strokeWidth="1.400"><path d="M2.500 9A8.500 8.500 0 0 1 18.500 6M19 1.500V6.500H14M2 20V15H7M2.500 15.500A8.500 8.500 0 0 0 9 19.500" /><circle cx="16" cy="16" r="5" fill="#ff9c0f" stroke="none" /></svg></Slot>
        <Slot w="w-[40px]"><Ico w={20} h={14} color="#111" sw={1.200}><rect x=".6" y=".6" width="18.800" height="12.800" rx="1.500" /><path d="M3 4.500H17M3 7.500H17" strokeDasharray="1.500 2" /><path d="M6 10.500H14" /></Ico></Slot>
        <div className="w-[56px] text-center leading-[20px]"><div>ENG</div><div>IN</div></div>
        <div className="w-[3px]" />
        <Slot w="w-[30px]"><Ico w={20} h={16} color="#111" sw={1.400}><path d="M1 6Q10 -3 19 6M4 9Q10 3 16 9M7 12Q10 9 13 12" /><circle cx="10" cy="14" r="1.300" fill="#111" /></Ico></Slot>
        <Slot w="w-[30px]"><Ico w={20} h={17} color="#111" sw={1.300}><path d="M1 6H4.500L9.500 1.500V15.500L4.500 11H1ZM12 6Q14 8.500 12 11M14.500 4Q18 8.500 14.500 13M17 2Q21.500 8.500 17 15" /></Ico></Slot>
        <Slot w="w-[30px]"><svg width="21" height="17" viewBox="0 0 21 17"><rect x="1" y="5" width="17" height="10.500" rx="2" fill="#111" /><rect x="19" y="8" width="1.800" height="4.500" fill="#111" /><rect x="3" y="7" width="13" height="6.500" rx=".5" fill="#111" stroke="#ddd" strokeWidth=".7" /><path d="M5.500 0L1 7H4L3 12L8 5H5Z" fill="#111" stroke="#e8d9d9" strokeWidth=".7" /></svg></Slot>
        <div className="w-[93px] text-right leading-[20px] tracking-[0.200px]"><div>12:33</div><div>24-03-2023</div></div>
        <div className="ml-[10px] h-[19px] w-[19px] rounded-full bg-[#0a66c2] text-center text-[12px] leading-[19px] text-white">5</div>
      </div>
    </div>
  );
}

export default function App() {
  return (
    <div className="flex h-[1080px] w-[1920px] flex-col overflow-hidden bg-[#f5f5f5] font-['Noto_Sans',sans-serif]">
      <TitleBar />
      <MenuBar />
      <Toolbar />
      <div className="flex h-[851px] shrink-0">
        <LeftPane />
        <div className="w-[2px] shrink-0 bg-[#f5f5f5]" />
        <Workspace />
      </div>
      <SheetTabs />
      <StatusBar />
      <Taskbar />
    </div>
  );
}
